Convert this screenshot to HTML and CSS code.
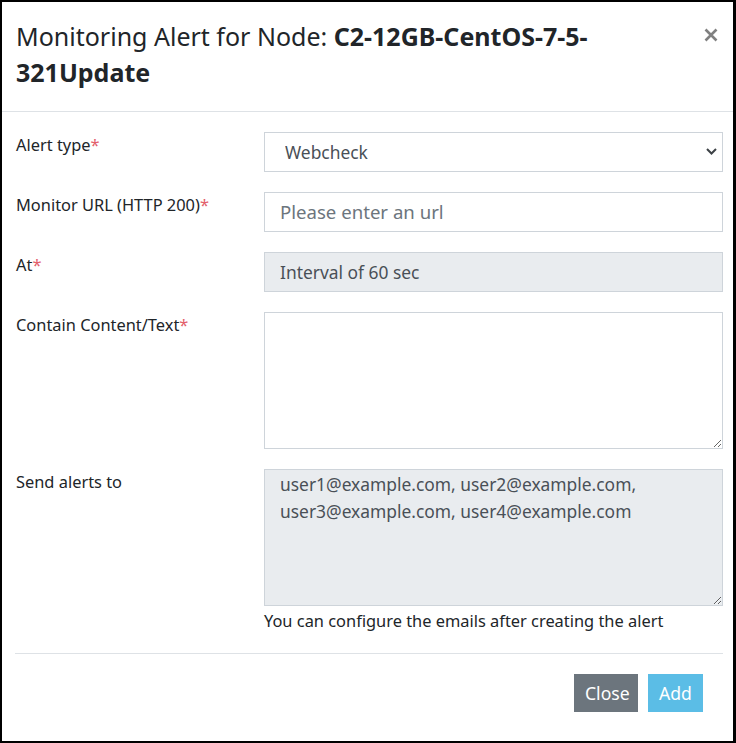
FILE: index.html
```html
<!DOCTYPE html>
<html lang="en">
<head>
<meta charset="utf-8">
<title>Monitoring Alert</title>
<link rel="stylesheet" href="styles.css">
</head>
<body>
<div class="modal">
  <div class="modal-header">
    <h5 class="modal-title">Monitoring Alert for Node: <b>C2-12GB-CentOS-7-5-321Update</b></h5>
    <button class="close" type="button" aria-label="Close">
      <svg width="14" height="14" viewBox="0 0 14 14"><path d="M1.5 1.5 L12.5 12.5 M12.5 1.5 L1.5 12.5" stroke="#808080" stroke-width="2.6" fill="none"/></svg>
    </button>
  </div>
  <div class="modal-body">
    <div class="form-row">
      <label class="form-label">Alert type<span class="req">*</span></label>
      <div class="select-wrap">
        <select class="form-control select"><option>Webcheck</option></select>
        <svg class="chevron" width="11" height="7" viewBox="0 0 11 7"><path d="M1 1 L5.5 5.5 L10 1" stroke="#3d4246" stroke-width="2" fill="none"/></svg>
      </div>
    </div>
    <div class="form-row">
      <label class="form-label">Monitor URL (HTTP 200)<span class="req">*</span></label>
      <input class="form-control url" type="text" placeholder="Please enter an url">
    </div>
    <div class="form-row">
      <label class="form-label">At<span class="req">*</span></label>
      <input class="form-control" type="text" value="Interval of 60 sec" disabled>
    </div>
    <div class="form-row">
      <label class="form-label">Contain Content/Text<span class="req">*</span></label>
      <textarea class="form-control area"></textarea>
    </div>
    <div class="form-row last">
      <label class="form-label">Send alerts to</label>
      <div class="field">
        <textarea class="form-control area" disabled>user1@example.com, user2@example.com, user3@example.com, user4@example.com</textarea>
        <div class="help">You can configure the emails after creating the alert</div>
      </div>
    </div>
  </div>
  <div class="modal-footer">
    <button class="btn btn-secondary" type="button">Close</button>
    <button class="btn btn-info" type="button">Add</button>
  </div>
</div>
</body>
</html>
```
FILE: styles.css
```css
* { box-sizing: border-box; }
html, body { margin: 0; padding: 0; background: #fff; }
body {
  font-family: "Noto Sans", "Open Sans", sans-serif;
  color: #212529;
  width: 736px;
  height: 743px;
  overflow: hidden;
}
.modal {
  border-style: solid;
  border-color: #000;
  border-width: 2px 3px 2px 2px;
  height: 743px;
  display: flex;
  flex-direction: column;
}
.modal-header {
  display: flex;
  justify-content: space-between;
  align-items: flex-start;
  padding: 16px 14px 21px 14px;
  border-bottom: 1px solid #dee2e6;
}
.modal-title {
  margin: 0;
  font-size: 25px;
  line-height: 36px;
  font-weight: 400;
  width: 640px;
}
.modal-title b { font-weight: 700; }
.close {
  border: 0;
  background: transparent;
  padding: 0;
  margin: 10px 1px 0 0;
  width: 14px;
  height: 14px;
  display: block;
  cursor: pointer;
}
.close svg { display: block; }
.modal-body {
  padding: 20px 10px 20px 14px;
}
.form-row {
  display: grid;
  grid-template-columns: 248px 459px;
  margin-bottom: 20px;
}
.form-row.last { margin-bottom: 0; }
.form-label {
  font-size: 16.4px;
  line-height: 24px;
  padding-top: 1px;
}
.req { color: #e3606b; }
.form-control {
  display: block;
  width: 459px;
  height: 40px;
  margin: 0;
  border: 1px solid #ced4da;
  border-radius: 0;
  background: #fff;
  font-family: inherit;
  font-size: 17.4px;
  line-height: 27px;
  color: #495057;
  padding: 5px 15px;
  outline: none;
}
.form-control::placeholder { color: #6c757d; opacity: 1; }
.url::placeholder { font-size: 18.6px; }
.form-control:disabled { background: #e9ecef; color: #495057; }
.select-wrap { position: relative; }
.select {
  appearance: none;
  -webkit-appearance: none;
  padding-left: 20px;
}
.chevron {
  position: absolute;
  right: 6px;
  top: 16px;
}
.area {
  height: 137px;
  padding: 1px 15px;
  line-height: 26.7px;
  resize: both;
}
.help {
  font-size: 16.4px;
  line-height: 24px;
  margin-top: 3px;
  color: #212529;
}
.modal-footer {
  margin: 0 10px 0 13px;
  border-top: 1px solid #dee2e6;
  padding: 20px 20px 0 0;
  display: flex;
  justify-content: flex-end;
  gap: 10px;
}
.btn {
  border: 0;
  border-radius: 0;
  height: 38px;
  padding: 0 11px;
  font-family: inherit;
  font-size: 17.6px;
  line-height: 38px;
  color: #fff;
  cursor: pointer;
}
.btn-secondary { background: #6c757d; width: 64px; }
.btn-info { background: #5bbde6; width: 55px; }
```
